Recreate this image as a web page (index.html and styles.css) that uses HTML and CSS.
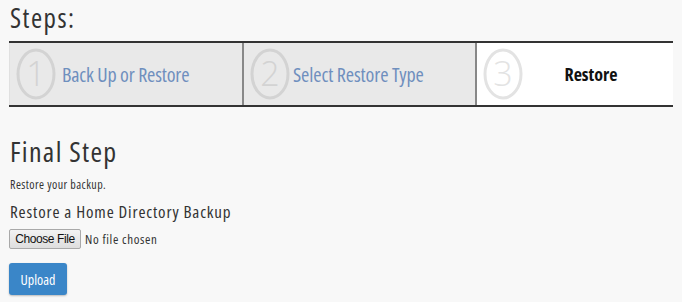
FILE: index.html
```html
<!DOCTYPE html>
<html>
<head>
<meta charset="utf-8">
<link rel="stylesheet" href="styles.css">
</head>
<body>
<div class="page">
  <h2 class="title">Steps:</h2>
  <div class="steps">
    <div class="step">
      <svg class="num" width="40" height="52" viewBox="0 0 40 52"><ellipse cx="20" cy="26" rx="18" ry="24" fill="none" stroke="#d3d3d3" stroke-width="3"/><text x="20" y="38" text-anchor="middle" font-family="Open Sans" font-weight="300" font-size="34" fill="#d3d3d3">1</text></svg>
      <span class="label link first">Back Up or Restore</span>
    </div>
    <div class="step">
      <svg class="num" width="40" height="52" viewBox="0 0 40 52"><ellipse cx="20" cy="26" rx="18" ry="24" fill="none" stroke="#d3d3d3" stroke-width="3"/><text x="20" y="38" text-anchor="middle" font-family="Open Sans" font-weight="300" font-size="34" fill="#d3d3d3">2</text></svg>
      <span class="label link">Select Restore Type</span>
    </div>
    <div class="step active">
      <svg class="num" width="40" height="52" viewBox="0 0 40 52"><ellipse cx="20" cy="26" rx="18" ry="24" fill="none" stroke="#e3e3e3" stroke-width="3"/><text x="20" y="38" text-anchor="middle" font-family="Open Sans" font-weight="300" font-size="34" fill="#e3e3e3">3</text></svg>
      <span class="label current">Restore</span>
    </div>
  </div>
  <h3 class="heading">Final Step</h3>
  <p class="desc">Restore your backup.</p>
  <p class="sub">Restore a Home Directory Backup</p>
  <div class="filerow"><span class="choose">Choose File</span><span class="nofile">No file chosen</span></div>
  <button class="upload">Upload</button>
</div>
</body>
</html>
```
FILE: styles.css
```css
html, body { margin: 0; padding: 0; }
body {
  background: #f8f8f8;
  font-family: "Open Sans", sans-serif;
  color: #333;
  width: 682px;
  height: 302px;
  overflow: hidden;
}
.page { padding: 0 9px; }
.title {
  margin: 0;
  padding-top: 1px;
  font-size: 27px;
  font-weight: 400;
  font-stretch: 75%;
  letter-spacing: 1.5px;
  line-height: 34px;
  color: #333;
  padding-left: 1px;
}
.steps {
  margin-top: 6px;
  display: flex;
  width: 664px;
  height: 62px;
  border-top: 2px solid #333;
  border-bottom: 2px solid #333;
}
.step {
  width: 233px;
  display: flex;
  align-items: center;
  background: #e9e9e9;
  padding-left: 6px;
  box-sizing: border-box;
  border-left: 1px solid #e0e0e0;
}
.step + .step { border-left: 2px solid #888; padding-left: 6px; }
.step.active { flex: 1; background: #fff; }
.num { flex: none; }
.label { margin-left: 6px; font-size: 20px; font-stretch: 75%; }
.label.first { letter-spacing: -0.15px; }
.step + .step .label { margin-left: 3px; letter-spacing: -0.1px; }
.link { color: #6f8fbe; }
.step.active .current { flex: 1; text-align: center; font-weight: 700; color: #111; margin-left: 0; padding-right: 14px; font-size: 18px; letter-spacing: 0; }
.heading {
  margin: 26px 0 0 1px;
  font-size: 28px;
  font-weight: 400;
  font-stretch: 75%;
  letter-spacing: 1.3px;
  line-height: 36px;
}
.desc { margin: 8px 0 0 1px; font-size: 12px; font-stretch: 75%; letter-spacing: 0.45px; line-height: 16px; }
.sub { margin: 8px 0 0 1px; font-size: 17px; font-stretch: 75%; letter-spacing: 0.85px; line-height: 22px; }
.filerow { margin-top: 6px; display: flex; align-items: center; height: 20px; }
.choose {
  box-sizing: border-box;
  height: 20px; width: 72px;
  border: 1px solid #a9a9a9;
  border-radius: 2px;
  background: linear-gradient(#f3f3f3, #dedede);
  font-family: "Liberation Sans", sans-serif;
  font-size: 12px;
  letter-spacing: -0.4px;
  color: #111;
  display: flex; align-items: center; justify-content: center;
}
.nofile { margin-left: 4px; font-size: 13px; font-stretch: 75%; letter-spacing: 0.65px; color: #333; }
.upload {
  display: block;
  margin-top: 14px;
  width: 58px; height: 32px;
  border: none;
  border-radius: 3px;
  background: #3a86c8;
  color: #fff;
  font-family: "Open Sans", sans-serif;
  font-size: 14px;
  font-stretch: 75%;
  box-shadow: 0 1px 2px rgba(0,0,0,.25);
}
```
